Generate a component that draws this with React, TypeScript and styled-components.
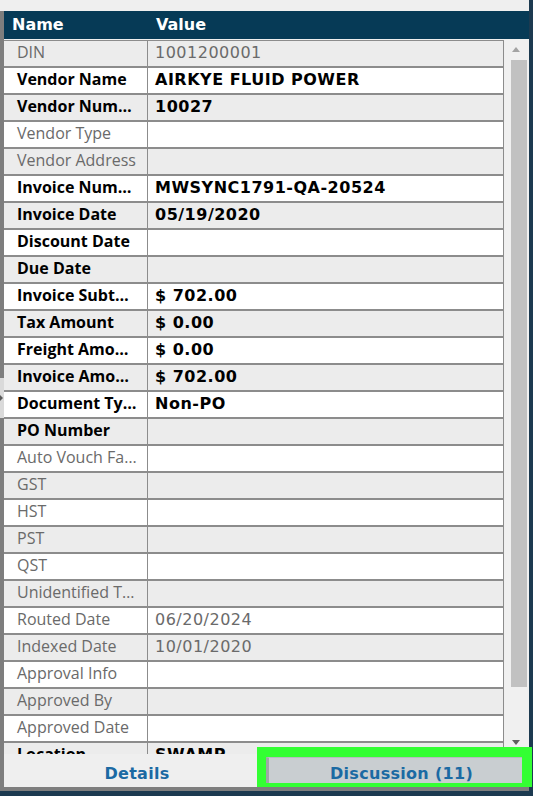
import React from "react";
import styled, { createGlobalStyle } from "styled-components";

type Field = {
  label: string;
  value?: string;
  strong?: boolean;
};

const fields: Field[] = [
  { label: "DIN", value: "1001200001" },
  { label: "Vendor Name", value: "AIRKYE FLUID POWER", strong: true },
  { label: "Vendor Number", value: "10027", strong: true },
  { label: "Vendor Type" },
  { label: "Vendor Address" },
  { label: "Invoice Number", value: "MWSYNC1791-QA-20524", strong: true },
  { label: "Invoice Date", value: "05/19/2020", strong: true },
  { label: "Discount Date", strong: true },
  { label: "Due Date", strong: true },
  { label: "Invoice Subtotal", value: "$ 702.00", strong: true },
  { label: "Tax Amount", value: "$ 0.00", strong: true },
  { label: "Freight Amount", value: "$ 0.00", strong: true },
  { label: "Invoice Amount", value: "$ 702.00", strong: true },
  { label: "Document Type", value: "Non-PO", strong: true },
  { label: "PO Number", strong: true },
  { label: "Auto Vouch Failure Reason" },
  { label: "GST" },
  { label: "HST" },
  { label: "PST" },
  { label: "QST" },
  { label: "Unidentified Tax" },
  { label: "Routed Date", value: "06/20/2024" },
  { label: "Indexed Date", value: "10/01/2020" },
  { label: "Approval Info" },
  { label: "Approved By" },
  { label: "Approved Date" },
  { label: "Location", value: "SWAMP", strong: true },
];

const App = () => {
  return (
    <Page>
      <GlobalStyle />
      <Panel>
        <Frame>
          <Header>
            <HeaderCell>Name</HeaderCell>
            <HeaderCell>Value</HeaderCell>
          </Header>
          <Body>
            <Rows>
              {fields.map((f, i) => (
                <Row key={f.label} $alt={i % 2 === 0}>
                  <NameCell $strong={f.strong}>{f.label}</NameCell>
                  <ValueCell $strong={f.strong}>{f.value}</ValueCell>
                </Row>
              ))}
            </Rows>
            <ScrollBar>
              <ArrowUp />
              <Thumb />
              <ArrowDown />
            </ScrollBar>
          </Body>
          <TabBar>
            <Tab>Details</Tab>
            <Highlight>
              <TabButton>Discussion (11)</TabButton>
            </Highlight>
          </TabBar>
        </Frame>
        <Handle />
      </Panel>
    </Page>
  );
};

const GlobalStyle = createGlobalStyle`
  html, body {
    margin: 0;
    padding: 0;
    background: #1c3a50;
  }
  body {
    font-family: "Open Sans", "Liberation Sans", sans-serif;
  }
`;

const Page = styled.div`
  width: 533px;
  height: 796px;
  background: #1c3a50;
  overflow: hidden;
`;

const Panel = styled.div`
  position: relative;
  width: 529px;
  height: 791px;
  box-sizing: border-box;
  padding-top: 11px;
  background: #efefef;
  display: flex;
  flex-direction: column;
`;

const Frame = styled.div`
  flex: 1;
  min-height: 0;
  display: flex;
  flex-direction: column;
  border-left: 4px solid #7e7e7e;
  border-bottom: 4px solid #7e7e7e;
`;

const Header = styled.div`
  height: 28px;
  flex-shrink: 0;
  box-sizing: border-box;
  padding-bottom: 2px;
  display: grid;
  grid-template-columns: 144px 1fr;
  align-items: center;
  background: #063a56;
  color: #ffffff;
  font-family: "DejaVu Sans", Verdana, sans-serif;
  font-weight: bold;
  font-size: 16px;
`;

const HeaderCell = styled.div`
  padding-left: 8px;
`;

const Body = styled.div`
  height: 715px;
  flex-shrink: 0;
  box-sizing: border-box;
  padding-top: 1px;
  display: flex;
  overflow: hidden;
`;

const Rows = styled.div`
  width: 500px;
  display: flex;
  flex-direction: column;
`;

const Row = styled.div<{ $alt: boolean }>`
  flex-shrink: 0;
  height: 27px;
  box-sizing: border-box;
  display: grid;
  grid-template-columns: 144px 356px;
  background: ${p => (p.$alt ? "#ececec" : "#ffffff")};
  border-top: 1px solid #8c8c8c;
  border-bottom: 1px solid #8c8c8c;
  border-right: 1px solid #8c8c8c;
`;

const NameCell = styled.div<{ $strong?: boolean }>`
  padding: 0 9px 2px 13px;
  border-right: 1px solid #8c8c8c;
  font-size: 16px;
  line-height: 23px;
  font-weight: ${p => (p.$strong ? 700 : 400)};
  color: ${p => (p.$strong ? "#000000" : "#6a6a6a")};
  white-space: nowrap;
  overflow: hidden;
  text-overflow: ellipsis;
`;

const ValueCell = styled.div<{ $strong?: boolean }>`
  padding: 0 8px 1px 7px;
  line-height: 24px;
  white-space: nowrap;
  overflow: hidden;
  font-family: "DejaVu Sans", Verdana, sans-serif;
  font-size: 16px;
  letter-spacing: 0.5px;
  font-weight: ${p => (p.$strong ? 700 : 400)};
  color: ${p => (p.$strong ? "#000000" : "#6a6a6a")};
`;

const ScrollBar = styled.div`
  position: relative;
  width: 24px;
  margin-left: 1px;
  background: #f0f0f0;
`;

const ArrowUp = styled.div`
  position: absolute;
  top: 7px;
  left: 7px;
  width: 0;
  height: 0;
  border-left: 4px solid transparent;
  border-right: 4px solid transparent;
  border-bottom: 5px solid #a3a3a3;
`;

const ArrowDown = styled.div`
  position: absolute;
  top: 700px;
  left: 7px;
  width: 0;
  height: 0;
  border-left: 4px solid transparent;
  border-right: 4px solid transparent;
  border-top: 5px solid #5f5f5f;
`;

const Thumb = styled.div`
  position: absolute;
  top: 20px;
  left: 6px;
  width: 16px;
  height: 627px;
  background: #c1c1c1;
`;

const TabBar = styled.div`
  flex: 1;
  display: flex;
  font-family: "DejaVu Sans", Verdana, sans-serif;
  font-weight: bold;
  font-size: 16px;
  letter-spacing: 0.3px;
  color: #1b6aa3;
`;

const Tab = styled.div`
  width: 253px;
  box-sizing: border-box;
  padding: 5px 0 0 13px;
  display: flex;
  align-items: center;
  justify-content: center;
`;

/* green marker box drawn over the Discussion tab, reaching up over the grid */
const Highlight = styled.div`
  position: relative;
  z-index: 1;
  flex: 1;
  margin: -7px -3px 0 0;
  display: flex;
  padding: 10px 10px 4px 9px;
  background: #33ff33;
`;

const TabButton = styled.div`
  flex: 1;
  box-sizing: border-box;
  padding: 6px 0 0 12px;
  display: flex;
  align-items: center;
  justify-content: center;
  background: #c9ced1;
  border-left: 3px solid #a0a5a8;
  border-top: 1px solid #b6bbbe;
`;

const Handle = styled.div`
  position: absolute;
  left: 0;
  top: 378px;
  width: 4px;
  height: 40px;
  background: #dadada;

  &::after {
    content: "";
    position: absolute;
    top: 17px;
    left: 0;
    border-top: 3px solid transparent;
    border-bottom: 3px solid transparent;
    border-left: 3px solid #5a5a5a;
  }
`;

export default App;
